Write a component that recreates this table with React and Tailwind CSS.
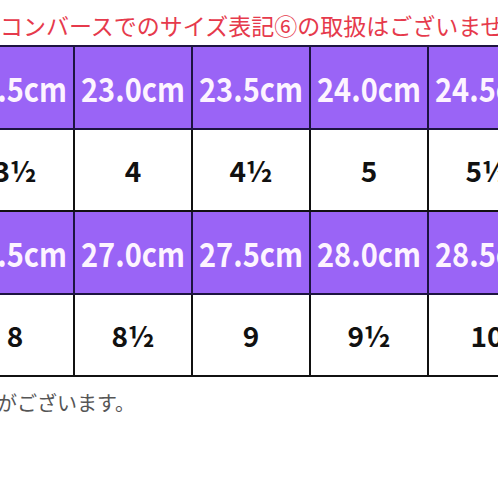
const rows = [
  { head: true, cells: ["22.5cm", "23.0cm", "23.5cm", "24.0cm", "24.5cm"] },
  { head: false, cells: ["3½", "4", "4½", "5", "5½"] },
  { head: true, cells: ["26.5cm", "27.0cm", "27.5cm", "28.0cm", "28.5cm"] },
  { head: false, cells: ["8", "8½", "9", "9½", "10"] },
];

export default function App() {
  return (
    <div
      className="w-[498px] h-[498px] overflow-hidden bg-white"
      style={{ fontFamily: '"Noto Sans CJK JP", "Noto Sans", sans-serif' }}
    >
      <p className="pt-[12px] h-[45px] text-[23px] leading-[27px] text-[#e63a4c] whitespace-nowrap">
        コンバースでのサイズ表記⑥の取扱はございません。
      </p>

      <table className="ml-[-45px] border-collapse table-fixed w-[592px]">
        <tbody>
          {rows.map((row, i) => (
            <tr key={i} className={row.head ? "h-[83px]" : "h-[82px]"}>
              {row.cells.map((c) => (
                <td
                  key={c}
                  className={
                    row.head
                      ? "w-[118px] border-2 border-[#1d1440] bg-[#9a64f6] text-center text-[#fdf4ff] font-bold text-[29px] leading-none"
                      : "w-[118px] border-2 border-[#111] bg-white text-center text-[#111] font-bold text-[28px] leading-none"
                  }
                >
                  {row.head ? (
                    <span className="inline-block scale-y-[1.15]">{c}</span>
                  ) : (
                    c
                  )}
                </td>
              ))}
            </tr>
          ))}
        </tbody>
      </table>

      <p className="mt-[14px] ml-[-3px] text-[20px] leading-[24px] text-[#555] whitespace-nowrap">
        がございます。
      </p>
    </div>
  );
}
